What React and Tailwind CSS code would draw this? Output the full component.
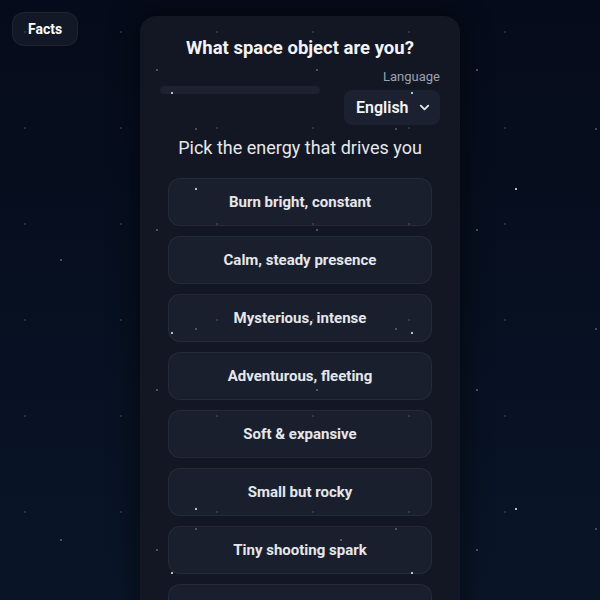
import { ChevronDown } from "lucide-react";

const choices = [
  "Burn bright, constant",
  "Calm, steady presence",
  "Mysterious, intense",
  "Adventurous, fleeting",
  "Soft & expansive",
  "Small but rocky",
  "Tiny shooting spark",
  "Quietly glowing",
];

// tiled star layers: [tile size, x, y, radius, colour, opacity]
const starLayers = [
  [96, 25, 32, 0.7, "#94a3b8", 0.55],
  [160, 157, 70, 0.8, "#cbd5e1", 0.7],
  [200, 196, 129, 0.8, "#cbd5e1", 0.65],
  [240, 172, 93, 1, "#ffffff", 0.95],
  [280, 61, 260, 0.8, "#cbd5e1", 0.7],
  [320, 196, 189, 1, "#ffffff", 0.95],
];

function Stars() {
  return (
    <svg className="pointer-events-none fixed inset-0 z-50 h-full w-full">
      <defs>
        {starLayers.map(([size, x, y, r, color, op]) => (
          <pattern
            key={size}
            id={"stars-" + size}
            width={size}
            height={size}
            patternUnits="userSpaceOnUse"
          >
            <circle cx={x} cy={y} r={r} fill={color} opacity={op} />
          </pattern>
        ))}
      </defs>
      {starLayers.map(([size]) => (
        <rect key={size} width="100%" height="100%" fill={`url(#stars-${size})`} />
      ))}
    </svg>
  );
}

export default function App() {
  return (
    <div className="relative min-h-screen bg-gradient-to-b from-[#050b1a] to-[#0a1629] font-['Roboto','Liberation_Sans',sans-serif] text-white">
      <Stars />

      <button className="absolute left-3 top-3 rounded-xl border border-white/5 bg-[#121826] px-[15px] py-1.5 text-sm font-bold text-white">
        Facts
      </button>

      <div className="flex justify-center pt-4">
        <div className="w-[320px] rounded-2xl bg-[#121723] px-5 pt-[18px] pb-6 shadow-[0_0_24px_8px_rgba(0,0,0,0.35)]">
          <h1 className="text-center text-[18.5px] font-bold leading-7 text-[#f3f4f6]">
            What space object are you?
          </h1>

          <div className="mt-[5px] flex items-start justify-between gap-6">
            <div className="mt-[19px] h-2 flex-1 rounded-full bg-[#1c2230]" />
            <div className="flex flex-col items-end">
              <span className="text-[13px] leading-5 text-[#9ca3af]">Language</span>
              <div className="mt-[3px] flex h-[35px] w-24 items-center justify-between rounded-lg bg-[#1b2130] pl-3 pr-2">
                <span className="text-base font-semibold text-[#f3f4f6]">English</span>
                <ChevronDown size={15} strokeWidth={3} className="text-[#e5e7eb]" />
              </div>
            </div>
          </div>

          <p className="mt-[9px] text-center text-lg leading-7 text-[#e5e7eb]">
            Pick the energy that drives you
          </p>

          <div className="mt-4 flex flex-col gap-2.5 px-2">
            {choices.map((c) => (
              <button
                key={c}
                className="h-12 rounded-xl border border-white/5 bg-[#1a1f2d] text-[15px] font-bold text-[#e5e7eb]"
              >
                {c}
              </button>
            ))}
          </div>
        </div>
      </div>
    </div>
  );
}
